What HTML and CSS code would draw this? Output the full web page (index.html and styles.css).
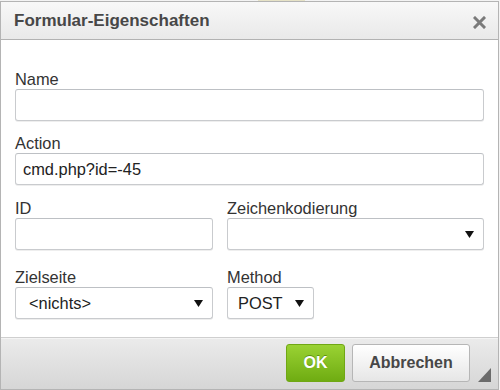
FILE: index.html
```html
<!DOCTYPE html>
<html lang="de">
<head>
<meta charset="utf-8">
<title>Formular-Eigenschaften</title>
<link rel="stylesheet" href="styles.css">
</head>
<body>
<div class="backdrop"><span class="backdrop-mark"></span></div>
<div class="dialog">
  <div class="titlebar">
    <span class="title">Formular-Eigenschaften</span>
    <svg class="close" width="13" height="13" viewBox="0 0 13 13" aria-label="Schließen">
      <path d="M2 2 L11 11 M11 2 L2 11" stroke="#7a7a7a" stroke-width="3" stroke-linecap="square"/>
    </svg>
  </div>
  <div class="content">
    <div class="field">
      <label class="label">Name</label>
      <div class="input"></div>
    </div>
    <div class="field gap-13">
      <label class="label">Action</label>
      <div class="input">cmd.php?id=-45</div>
    </div>
    <div class="row gap-14">
      <div class="field">
        <label class="label">ID</label>
        <div class="input"></div>
      </div>
      <div class="field">
        <label class="label">Zeichenkodierung</label>
        <div class="select"><span class="select-text"></span><svg class="arrow" width="9" height="7" viewBox="0 0 9 7"><path d="M0 0 H9 L4.5 7 Z" fill="#111"/></svg></div>
      </div>
    </div>
    <div class="row gap-18">
      <div class="field">
        <label class="label">Zielseite</label>
        <div class="select select-target"><span class="select-text">&lt;nichts&gt;</span><svg class="arrow" width="9" height="7" viewBox="0 0 9 7"><path d="M0 0 H9 L4.5 7 Z" fill="#111"/></svg></div>
      </div>
      <div class="field">
        <label class="label">Method</label>
        <div class="select select-method"><span class="select-text">POST</span><svg class="arrow" width="9" height="7" viewBox="0 0 9 7"><path d="M0 0 H9 L4.5 7 Z" fill="#111"/></svg></div>
      </div>
    </div>
  </div>
  <div class="footer">
    <button class="btn btn-ok">OK</button>
    <button class="btn btn-cancel">Abbrechen</button>
    <svg class="resizer" width="13" height="14" viewBox="0 0 13 14"><path d="M13 0 V14 H0 Z" fill="#6b6b6b"/></svg>
  </div>
</div>
</body>
</html>
```
FILE: styles.css
```css
* { box-sizing: border-box; }
html, body {
  margin: 0;
  padding: 0;
  width: 500px;
  height: 390px;
  overflow: hidden;
  background: #f3f3f3;
  font-family: "Liberation Sans", Arial, sans-serif;
}
.backdrop {
  height: 1px;
  display: flex;
}
.backdrop-mark {
  margin-left: 258px;
  width: 47px;
  background: #e6e2c6;
}
.dialog {
  width: 499px;
  height: 389px;
  border: 1px solid #b4b4b4;
  background: #fff;
  display: flex;
  flex-direction: column;
}
.titlebar {
  height: 38px;
  flex: none;
  display: flex;
  align-items: center;
  justify-content: space-between;
  padding: 0 12px 0 13px;
  background: linear-gradient(#f8f8f8, #e9e9e9);
  border-bottom: 1px solid #b2b2b2;
}
.title {
  font-size: 17px;
  font-weight: bold;
  color: #474747;
  line-height: 20px;
  margin-top: 1px;
}
.close { display: block; margin-top: 3px; }
.content {
  flex: 1;
  padding: 30px 14px 0 14px;
  display: flex;
  flex-direction: column;
}
.field {
  display: flex;
  flex-direction: column;
}
.gap-13 { margin-top: 13px; }
.gap-14 { margin-top: 14px; }
.gap-18 { margin-top: 18px; }
.row {
  display: grid;
  grid-template-columns: 198px 1fr;
  column-gap: 14px;
}
.label {
  font-size: 16.4px;
  line-height: 19px;
  color: #333;
}
.input, .select {
  height: 32px;
  border: 1px solid #c9cbce;
  border-top-color: #bdc0c4;
  border-radius: 3px;
  font-size: 16.4px;
  line-height: 30px;
  color: #222;
  padding: 0 7px;
  background: #fff;
  box-shadow: 0 1px 0 #eeeeee;
}
.select {
  display: flex;
  align-items: center;
  justify-content: space-between;
  padding: 0 9px 0 13px;
}
.select-method {
  width: 87px;
  padding-left: 10px;
}
.arrow { display: block; flex: none; }
.footer {
  height: 52px;
  flex: none;
  display: flex;
  align-items: flex-start;
  justify-content: flex-end;
  padding: 6px 7px 0 0;
  border-top: 1px solid #cfcfcf;
  box-shadow: inset 0 1px 0 #f4f4f4;
  background: linear-gradient(#ebebeb, #d6d6d6);
}
.btn {
  height: 38px;
  border-radius: 3px;
  font-family: "Liberation Sans", Arial, sans-serif;
  font-size: 16px;
  font-weight: bold;
  padding: 0;
  cursor: pointer;
}
.btn-ok {
  width: 59px;
  color: #fff;
  background: linear-gradient(#9ad233, #6fac12);
  border: 1px solid #70a714;
  text-shadow: 0 -1px 0 #5d9310;
}
.btn-cancel {
  width: 118px;
  margin-left: 7px;
  color: #474747;
  background: linear-gradient(#ffffff, #e6e6e6);
  border: 1px solid #b6b6b6;
}
.resizer {
  display: block;
  margin: 24px 0 0 8px;
}
```
